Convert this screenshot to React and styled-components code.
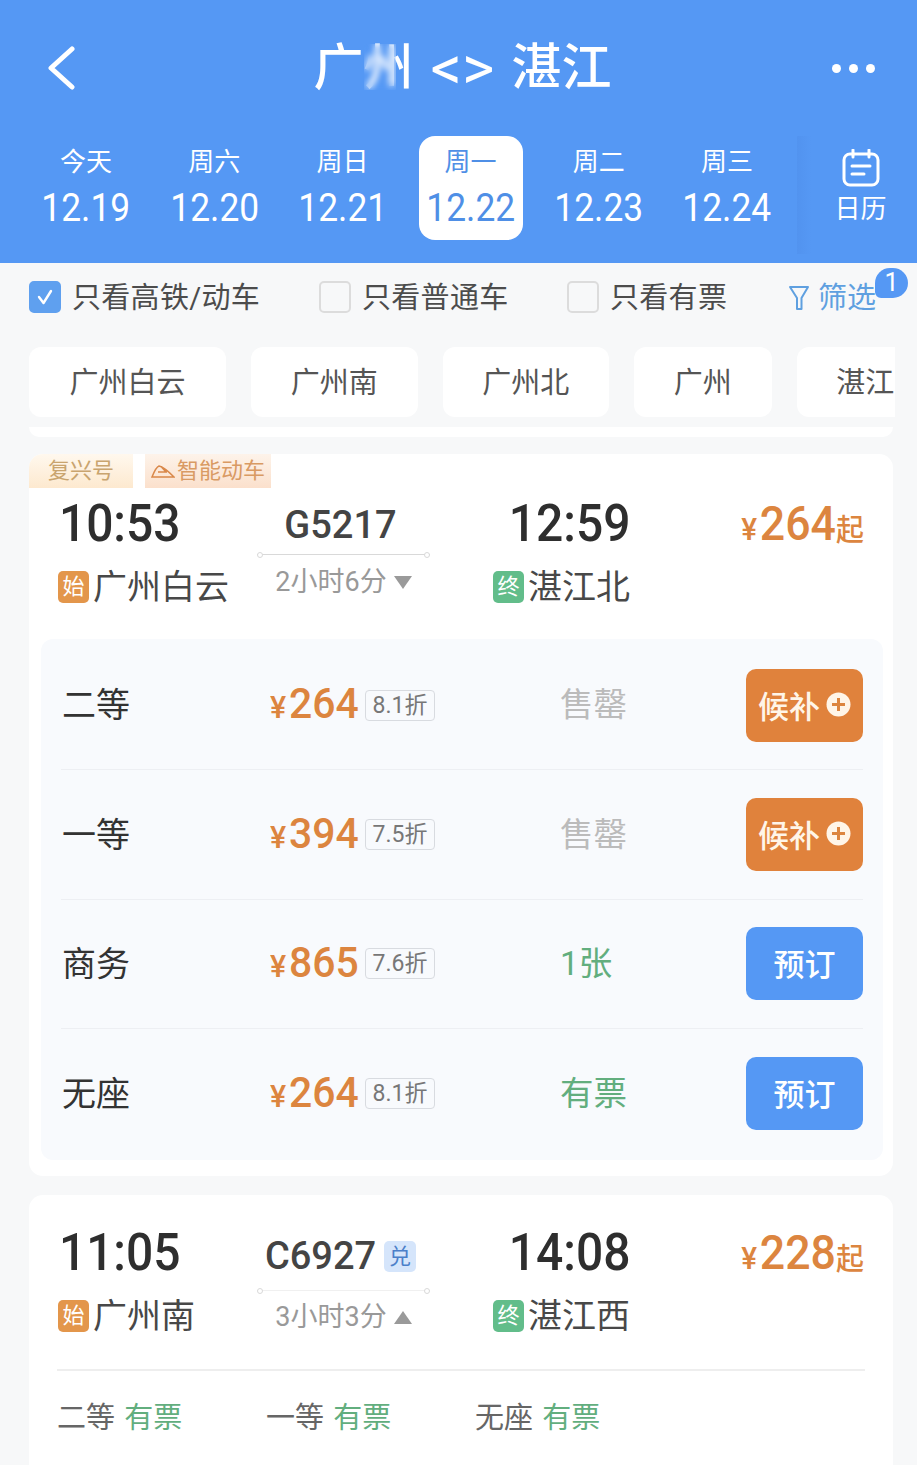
import React from "react";
import styled, { createGlobalStyle } from "styled-components";

const blue = "#5598f4";
const orange = "#dc853f";
const green = "#62ae7e";

const days = [
  { week: "今天", date: "12.19" },
  { week: "周六", date: "12.20" },
  { week: "周日", date: "12.21" },
  { week: "周一", date: "12.22", active: true },
  { week: "周二", date: "12.23" },
  { week: "周三", date: "12.24" },
];

const seats = [
  { name: "二等", price: "264", off: "8.1折", left: "售罄", waitlist: true },
  { name: "一等", price: "394", off: "7.5折", left: "售罄", waitlist: true },
  { name: "商务", price: "865", off: "7.6折", left: "1张", ok: true },
  { name: "无座", price: "264", off: "8.1折", left: "有票", ok: true },
];

const App = () => {
  return (
    <Page>
      <GlobalStyle />
      <Header>
        <TitleRow>
          <IconSlot>
            <svg width="30" height="44" viewBox="0 0 30 44" fill="none">
              <path d="M25 3 L4 22 L25 41" stroke="#fff" strokeWidth="5" strokeLinecap="round" strokeLinejoin="round" />
            </svg>
          </IconSlot>
          <Title>
            广州
            <Swap>&lt;&gt;</Swap>
            湛江
            <TitleBlur />
          </Title>
          <Dots>
            <i />
            <i />
            <i />
          </Dots>
        </TitleRow>
        <Tabs>
          {days.map((day) => (
            <Tab key={day.date} $active={day.active}>
              <Week>{day.week}</Week>
              <DateText>{day.date}</DateText>
            </Tab>
          ))}
          <CalendarCell>
            <svg width="38" height="38" viewBox="0 0 38 38" fill="none" stroke="#fff" strokeWidth="3" strokeLinecap="round">
              <rect x="2" y="5" width="34" height="31" rx="6" />
              <path d="M11 1 V8 M27 1 V8 M10 17 H28 M10 25 H22" />
            </svg>
            <CalendarText>日历</CalendarText>
          </CalendarCell>
        </Tabs>
      </Header>

      <Filters>
        <FilterItem $width={290}>
          <Check $checked>
            <svg width="20" height="18" viewBox="0 0 20 18" fill="none">
              <path d="M4 9 L8.5 15 L16 3" stroke="#fff" strokeWidth="2.4" strokeLinecap="round" strokeLinejoin="round" />
            </svg>
          </Check>
          只看高铁/动车
        </FilterItem>
        <FilterItem $width={248}>
          <Check />
          只看普通车
        </FilterItem>
        <FilterItem $width={221}>
          <Check />
          只看有票
        </FilterItem>
        <FilterLink>
          <svg width="22" height="26" viewBox="0 0 22 26" fill="none">
            <path d="M2 2 H20 L13.5 13 V24 H9 V13 Z" stroke="#5fa0e0" strokeWidth="2" strokeLinejoin="round" />
          </svg>
          筛选
          <Badge>1</Badge>
        </FilterLink>
      </Filters>

      <Chips>
        {["广州白云", "广州南", "广州北", "广州", "湛江"].map((name) => (
          <Chip key={name}>{name}</Chip>
        ))}
      </Chips>

      <CardSliver />

      <Card>
        <Tags>
          <Tag>复兴号</Tag>
          <Tag $warm>
            <svg width="24" height="14" viewBox="0 0 24 14" fill="none" stroke="#d9884a" strokeWidth="1.5">
              <path d="M1 13 H23 C18 8 13 3 8 2 C5 3 3 8 1 13 Z M7 8 H16 M10 2.5 L15 8" />
            </svg>
            智能动车
          </Tag>
        </Tags>
        <Journey>
          <Time>10:53</Time>
          <Middle $top={5}>
            <TrainNo>G5217</TrainNo>
            <RouteLine $top={7} />
            <Duration $top={11}>
              2小时6分
              <Arrow />
            </Duration>
          </Middle>
          <ArrivalTime>12:59</ArrivalTime>
          <Price>
            <small>¥</small>264<em>起</em>
          </Price>
          <Station>
            <StationMark>始</StationMark>广州白云
          </Station>
          <ArrivalStation>
            <StationMark $end>终</StationMark>湛江北
          </ArrivalStation>
        </Journey>
        <SeatPanel>
          {seats.map((seat) => (
            <SeatRow key={seat.name}>
              <SeatName>{seat.name}</SeatName>
              <SeatPrice>
                <Amount>
                  <small>¥</small>
                  {seat.price}
                </Amount>
                <Discount>{seat.off}</Discount>
              </SeatPrice>
              <SeatLeft $ok={seat.ok}>{seat.left}</SeatLeft>
              <ActionButton $waitlist={seat.waitlist}>
                {seat.waitlist ? "候补" : "预订"}
                {seat.waitlist && (
                  <svg width="25" height="25" viewBox="0 0 25 25">
                    <circle cx="12.5" cy="12.5" r="12" fill="#fff5e8" />
                    <path d="M12.5 6 V19 M6 12.5 H19" stroke={orange} strokeWidth="3" />
                  </svg>
                )}
              </ActionButton>
            </SeatRow>
          ))}
        </SeatPanel>
      </Card>

      <NextCard>
        <Journey>
          <Time>11:05</Time>
          <Middle $top={7}>
            <TrainNo>
              C6927<Exchange>兑</Exchange>
            </TrainNo>
            <RouteLine $top={12} $faint />
            <Duration $top={10}>
              3小时3分
              <Arrow $up />
            </Duration>
          </Middle>
          <ArrivalTime>14:08</ArrivalTime>
          <Price>
            <small>¥</small>228<em>起</em>
          </Price>
          <Station>
            <StationMark>始</StationMark>广州南
          </Station>
          <ArrivalStation>
            <StationMark $end>终</StationMark>湛江西
          </ArrivalStation>
        </Journey>
        <Summary>
          <SummaryItem>
            二等 <b>有票</b>
          </SummaryItem>
          <SummaryItem>
            一等 <b>有票</b>
          </SummaryItem>
          <SummaryItem>
            无座 <b>有票</b>
          </SummaryItem>
        </Summary>
      </NextCard>
    </Page>
  );
};

export default App;

const GlobalStyle = createGlobalStyle`
  html, body {
    margin: 0;
    padding: 0;
    background: #f7f8f9;
  }
  * {
    box-sizing: border-box;
  }
`;

const Page = styled.div`
  width: 917px;
  height: 1465px;
  overflow: hidden;
  background: #f7f8f9;
  font-family: Roboto, "Noto Sans CJK SC", sans-serif;
  color: #444;
`;

const Header = styled.header`
  height: 263px;
  padding-top: 36px;
  background: ${blue};
  color: #fff;
`;

const TitleRow = styled.div`
  height: 64px;
  display: grid;
  grid-template-columns: 47px 30px 1fr 43px 42px;
  align-items: center;
`;

const IconSlot = styled.div`
  grid-column: 2;
  display: flex;
`;

const Title = styled.div`
  grid-column: 3;
  position: relative;
  justify-self: center;
  margin-left: 16px;
  display: flex;
  align-items: center;
  gap: 17px;
  font-size: 50px;
  font-weight: 500;
  line-height: 64px;
  white-space: nowrap;
`;

const Swap = styled.span`
  font-size: 62px;
  font-weight: 400;
  line-height: 64px;
`;

const TitleBlur = styled.span`
  position: absolute;
  left: 50px;
  top: 8px;
  width: 32px;
  height: 46px;
  backdrop-filter: blur(3px);
`;

const Dots = styled.div`
  grid-column: 4;
  display: flex;
  justify-content: space-between;

  i {
    width: 9px;
    height: 9px;
    border-radius: 50%;
    background: #fff;
  }
`;

const Tabs = styled.div`
  height: 127px;
  margin-top: 36px;
  padding-left: 22px;
  display: flex;
  align-items: flex-start;
`;

const Tab = styled.div`
  width: 128.2px;
  height: 104px;
  display: flex;
  flex-direction: column;
  align-items: center;
  padding-top: 7px;
  position: relative;
  color: ${(p) => (p.$active ? "#4f8fe6" : "#fff")};

  ${(p) =>
    p.$active &&
    `
    &::before {
      content: "";
      position: absolute;
      top: 0;
      bottom: 0;
      left: 12px;
      right: 12px;
      border-radius: 16px;
      background: #fff;
    }
  `}
`;

const Week = styled.span`
  position: relative;
  font-size: 26px;
  line-height: 38px;
`;

const DateText = styled.span`
  position: relative;
  margin-top: 4px;
  font-size: 38px;
  line-height: 46px;
  transform: scaleX(0.93);
`;

const CalendarCell = styled.div`
  width: 120px;
  height: 118px;
  margin-left: 6px;
  padding: 13px 0 0 7px;
  display: flex;
  flex-direction: column;
  align-items: center;
  background: linear-gradient(90deg, #5293ef 0, ${blue} 14px);
`;

const CalendarText = styled.span`
  font-size: 26px;
  line-height: 38px;
  margin-top: 3px;
`;

const Filters = styled.div`
  height: 84px;
  padding: 18px 0 0 29px;
  display: flex;
  align-items: flex-start;
`;

const FilterItem = styled.div`
  width: ${(p) => p.$width}px;
  height: 32px;
  padding-top: 1px;
  display: flex;
  align-items: center;
  gap: 11px;
  font-size: 29px;
  line-height: 32px;
  letter-spacing: 0.3px;
  color: #4c4c4c;
  white-space: nowrap;
`;

const Check = styled.span`
  width: 32px;
  height: 32px;
  margin-top: -1px;
  flex: none;
  display: flex;
  align-items: center;
  justify-content: center;
  border-radius: 5px;
  background: ${(p) => (p.$checked ? "#5fa0ef" : "#f7f8f9")};
  border: 2px solid ${(p) => (p.$checked ? "#5fa0ef" : "#dcdcdc")};
`;

const FilterLink = styled.div`
  position: relative;
  height: 32px;
  padding-top: 1px;
  display: flex;
  align-items: center;
  gap: 8px;
  font-size: 29px;
  line-height: 32px;
  color: #5fa0e0;
`;

const Badge = styled.span`
  position: absolute;
  left: 87px;
  top: -13px;
  width: 33px;
  height: 30px;
  border-radius: 15px 15px 15px 6px;
  background: ${blue};
  color: #fff;
  font-size: 25px;
  line-height: 30px;
  text-align: center;
`;

const Chips = styled.div`
  width: 866px;
  margin-left: 29px;
  display: flex;
  gap: 25px;
  overflow: hidden;
`;

const Chip = styled.div`
  flex: none;
  height: 70px;
  padding: 1px 39.75px 0;
  border-radius: 12px;
  background: #fff;
  font-size: 29px;
  line-height: 70px;
  text-align: center;
  color: #555;

  &:first-child {
    min-width: 197px;
  }
`;

const CardSliver = styled.div`
  width: 864px;
  height: 10px;
  margin: 10px 0 0 29px;
  border-radius: 0 0 14px 14px;
  background: #fff;
`;

const Card = styled.section`
  width: 864px;
  height: 722px;
  margin: 17px 0 0 29px;
  border-radius: 14px;
  background: #fff;
  overflow: hidden;
`;

const NextCard = styled(Card)`
  height: 300px;
  margin-top: 19px;
  padding-top: 32px;
`;

const Tags = styled.div`
  height: 44px;
  display: flex;
  align-items: flex-start;
  gap: 12px;
`;

const Tag = styled.div`
  height: 34px;
  padding: 0 ${(p) => (p.$warm ? "6px" : "19px")};
  display: flex;
  align-items: center;
  gap: 2px;
  font-size: 22px;
  line-height: 34px;
  color: ${(p) => (p.$warm ? "#d99a63" : "#c9a46e")};
  background: ${(p) =>
    p.$warm ? "linear-gradient(180deg, #fdf3ea, #fbe0cc)" : "linear-gradient(180deg, #fff8ee, #fde9cf)"};
`;

const Journey = styled.div`
  padding: 0 29px 0 28px;
  display: grid;
  grid-template-columns: 200px 173px 200px 1fr;
  grid-template-rows: 52px 42px;
  row-gap: 16px;
  align-items: center;
`;

const Time = styled.div`
  justify-self: start;
  padding-left: 2px;
  font-size: 51px;
  font-weight: 500;
  line-height: 52px;
  color: #2e2e2e;
  transform: scaleX(0.94);
  transform-origin: left center;
`;

const ArrivalTime = styled(Time)`
  justify-self: end;
  padding-left: 0;
  transform-origin: right center;
`;

const Middle = styled.div`
  grid-column: 2;
  grid-row: 1 / span 2;
  align-self: start;
  margin-top: ${(p) => p.$top}px;
  display: flex;
  flex-direction: column;
  align-items: center;
`;

const TrainNo = styled.div`
  display: flex;
  align-items: center;
  gap: 8px;
  height: 44px;
  margin-left: -6px;
  font-size: 38px;
  font-weight: 500;
  line-height: 44px;
  color: #444;
  white-space: nowrap;
`;

const Exchange = styled.span`
  width: 32px;
  height: 31px;
  border-radius: 5px;
  background: #d5e5fb;
  color: #4b7fc9;
  font-size: 22px;
  font-weight: 400;
  line-height: 31px;
  text-align: center;
`;

const RouteLine = styled.div`
  position: relative;
  width: 100%;
  height: 1px;
  margin-top: ${(p) => p.$top}px;
  background: ${(p) => (p.$faint ? "#f0f0f0" : "#d9d9d9")};

  &::before,
  &::after {
    content: "";
    position: absolute;
    top: -2px;
    width: 4px;
    height: 4px;
    border-radius: 50%;
    background: #fff;
    border: 1px solid #d9d9d9;
  }
  &::before {
    left: 0;
  }
  &::after {
    right: 0;
  }
`;

const Duration = styled.div`
  margin-top: ${(p) => p.$top}px;
  display: flex;
  align-items: center;
  gap: 7px;
  font-size: 27px;
  line-height: 32px;
  color: #999;
`;

const Arrow = styled.i`
  width: 0;
  height: 0;
  border-left: 9px solid transparent;
  border-right: 9px solid transparent;
  ${(p) => (p.$up ? "border-bottom: 13px solid #9a9a9a;" : "border-top: 13px solid #9a9a9a;")}
`;

const Price = styled.div`
  justify-self: end;
  align-self: start;
  font-size: 48px;
  font-weight: 500;
  line-height: 52px;
  color: ${orange};
  white-space: nowrap;
  transform: scaleX(0.93);
  transform-origin: right center;

  small {
    margin-right: 3px;
    font-size: 32px;
  }
  em {
    font-style: normal;
    font-size: 30px;
  }
`;

const Station = styled.div`
  grid-column: 1;
  grid-row: 2;
  display: flex;
  align-items: center;
  gap: 4px;
  font-size: 34px;
  line-height: 42px;
  color: #484848;
  white-space: nowrap;
`;

const ArrivalStation = styled(Station)`
  grid-column: 3;
  justify-self: end;
`;

const StationMark = styled.span`
  width: 31px;
  height: 32px;
  margin-left: 1px;
  border-radius: 5px;
  background: ${(p) => (p.$end ? "#62bd8a" : "#e3964b")};
  color: #fff;
  font-size: 22px;
  line-height: 32px;
  text-align: center;
`;

const SeatPanel = styled.div`
  width: 842px;
  height: 521px;
  margin: 31px 0 0 12px;
  padding: 2px 20px 0;
  border-radius: 12px;
  background: #f8fafd;
`;

const SeatRow = styled.div`
  height: 129.4px;
  display: grid;
  grid-template-columns: 209px 223px 200px 1fr;
  align-items: center;
  border-bottom: 1px solid #edeff3;

  &:last-child {
    border-bottom: none;
  }
`;

const SeatName = styled.div`
  padding-left: 1px;
  font-size: 34px;
  line-height: 42px;
  color: #333;
`;

const SeatPrice = styled.div`
  display: flex;
  align-items: center;
  gap: 8px;
`;

const Amount = styled.div`
  width: 87px;
  font-size: 43px;
  font-weight: 500;
  line-height: 44px;
  color: ${orange};
  white-space: nowrap;
  transform: scaleX(0.95);
  transform-origin: left center;

  small {
    margin-right: 3px;
    font-size: 32px;
  }
`;

const Discount = styled.div`
  width: 70px;
  height: 31px;
  border: 1px solid #d8dbe0;
  border-radius: 4px;
  font-size: 23px;
  line-height: 29px;
  text-align: center;
  color: #777;
  white-space: nowrap;
`;

const SeatLeft = styled.div`
  padding-left: 67px;
  font-size: 33.5px;
  line-height: 42px;
  color: ${(p) => (p.$ok ? green : "#bbb")};
`;

const ActionButton = styled.div`
  width: 117px;
  height: 73px;
  justify-self: end;
  padding-bottom: 2px;
  display: flex;
  align-items: center;
  justify-content: center;
  gap: 6px;
  border-radius: 10px;
  background: ${(p) => (p.$waitlist ? "#e0823c" : blue)};
  color: ${(p) => (p.$waitlist ? "#fff5e8" : "#fff")};
  font-size: 31px;
  font-weight: 500;
`;

const Summary = styled.div`
  margin: 32px 28px 0;
  padding-top: 28px;
  border-top: 2px solid #eeeeee;
  display: flex;
`;

const SummaryItem = styled.div`
  width: 209px;
  font-size: 29px;
  line-height: 38px;
  color: #666;

  b {
    margin-left: 2px;
    font-weight: 400;
    color: ${green};
  }
`;
